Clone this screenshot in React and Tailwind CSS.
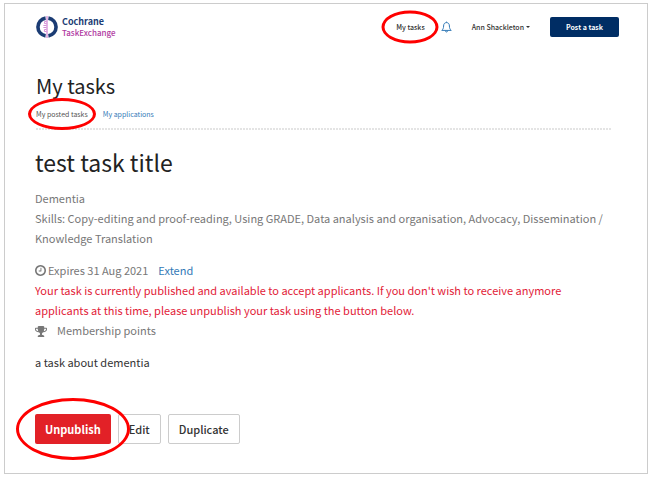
// src/pages/MyTasks.js
import React from 'react';

const skills = [
  'Copy-editing and proof-reading',
  'Using GRADE',
  'Data analysis and organisation',
  'Advocacy',
  'Dissemination / Knowledge Translation',
];

const LogoMark = () => (
  <svg className="size-[22px]" viewBox="0 0 22 22" fill="none" aria-hidden="true">
    <path d="M9.6 2.1A9 9 0 0 0 9.6 19.9" stroke="#1b3c74" strokeWidth="3.6" />
    <path d="M12.4 2.1A9 9 0 0 1 12.4 19.9" stroke="#1b3c74" strokeWidth="3.6" />
    <path d="M11 0V22" stroke="#e3b5e4" strokeWidth="2" />
    <path
      d="M10.5 5.5H8.6V7.6H10.5M10.5 9.5H7.4M7.4 11.5H10.5M10.5 13.5H8.4V15.5H10.5"
      stroke="#d48fd6"
      strokeWidth="1"
    />
  </svg>
);

const BellIcon = () => (
  <svg className="h-3 w-[11px]" viewBox="0 0 11 12" fill="none" stroke="#337ab7" aria-hidden="true">
    <path d="M5.5 .6V1.6M5.5 1.6C3.5 1.6 2.6 3 2.6 5C2.6 7.4 1.8 8.4 .8 9.4H10.2C9.2 8.4 8.4 7.4 8.4 5C8.4 3 7.5 1.6 5.5 1.6Z" />
    <path d="M4.4 9.8C4.5 11.4 6.5 11.4 6.6 9.8" />
  </svg>
);

const ClockIcon = () => (
  <svg className="h-[13px] w-[11px]" viewBox="0 0 1536 1792" fill="currentColor" aria-hidden="true">
    <path d="M896 544v448q0 14-9 23t-23 9h-320q-14 0-23-9t-9-23v-64q0-14 9-23t23-9h224v-352q0-14 9-23t23-9h64q14 0 23 9t9 23zm416 352q0-148-73-273t-198-198-273-73-273 73-198 198-73 273 73 273 198 198 273 73 273-73 198-198 73-273zm224 0q0 209-103 385.5t-279.5 279.5-385.5 103-385.5-103-279.5-279.5-103-385.5 103-385.5 279.5-279.5 385.5-103 385.5 103 279.5 279.5 103 385.5z" />
  </svg>
);

const TrophyIcon = () => (
  <svg className="h-[13px] w-3" viewBox="0 0 1664 1792" fill="currentColor" aria-hidden="true">
    <path d="M458 1015q-74-162-74-375h-256v96q0 78 94.5 162t235.5 117zm1078-279v-96h-256q0 213-74 375 141-33 235.5-117t94.5-162zm128-128v128q0 71-41.5 143t-112 130-173 97.5-215.5 44.5q-42 54-95 95-38 34-52.5 72.5t-14.5 89.5q0 54 30.5 91t97.5 37q75 0 133.5 45.5t58.5 114.5v64q0 14-9 23t-23 9h-832q-14 0-23-9t-9-23v-64q0-69 58.5-114.5t133.5-45.5q67 0 97.5-37t30.5-91q0-51-14.5-89.5t-52.5-72.5q-53-41-95-95-113-5-215.5-44.5t-173-97.5-112-130-41.5-143v-128q0-40 28-68t68-28h288v-96q0-66 47-113t113-47h576q66 0 113 47t47 113v96h288q40 0 68 28t28 68z" />
  </svg>
);

// Red ring drawn over the item it wraps
const Highlight = ({ className, children }) => (
  <div className="relative flex">
    {children}
    <span
      className={`pointer-events-none absolute top-1/2 left-1/2 z-10 -translate-x-1/2 -translate-y-1/2 rounded-[50%] border-3 border-[#fe0000] ${className}`}
    />
  </div>
);

const Header = () => (
  <header className="flex items-center justify-between pr-7 pl-[31px]">
    <a href="#home" className="flex items-center gap-1">
      <LogoMark />
      <span className="flex flex-col">
        <span className="text-[9px] leading-[11px] font-bold text-[#1b3c74]">Cochrane</span>
        <span className="text-[8px] leading-[11px] font-medium text-[#b0399f]">TaskExchange</span>
      </span>
    </a>
    <nav className="flex items-center text-[7px] font-medium text-[#333]">
      <Highlight className="h-[33px] w-[57px]">
        <a href="#tasks">My tasks</a>
      </Highlight>
      <button type="button" aria-label="Notifications" className="ml-4">
        <BellIcon />
      </button>
      <button type="button" className="ml-5 flex items-center gap-0.5">
        Ann Shackleton
        <span className="border-x-2 border-t-2 border-x-transparent border-t-[#333]" />
      </button>
      <button type="button" className="ml-5 h-5 w-[69px] rounded-xs bg-[#002d64] font-bold text-white">
        Post a task
      </button>
    </nav>
  </header>
);

const TaskActions = () => (
  <div className="mt-[42px] flex gap-[7px] text-[11px] font-medium text-[#333]">
    <Highlight className="h-[62px] w-[114px]">
      <button type="button" className="h-[30px] rounded-xs bg-[#e22127] px-2.5 font-bold text-white">
        Unpublish
      </button>
    </Highlight>
    <button type="button" className="h-[30px] rounded-xs border border-[#ccc] px-2.5">
      Edit
    </button>
    <button type="button" className="h-[30px] rounded-xs border border-[#ccc] px-2.5">
      Duplicate
    </button>
  </div>
);

export const MyTasks = () => {
  return (
    <div className="bg-white px-1 pt-[3px] pb-[5px] font-['Noto_Sans_CJK_SC','Noto_Sans',sans-serif]">
      <div className="border border-[#ccc] pt-3 pb-[29px]">
        <Header />
        <main className="pr-[35px] pl-[30px]">
          <div className="pt-[34px] pl-px">
            <h1 className="text-xl leading-7 text-[#222]">My tasks</h1>
            <div className="mt-[9px] flex gap-[15px] text-[7px] leading-[10px]">
              <Highlight className="h-8 w-[68px]">
                <a href="#posted" className="text-[#555]">My posted tasks</a>
              </Highlight>
              <a href="#applications" className="text-[#337ab7]">My applications</a>
            </div>
            <div className="mt-[9px] h-0.5 bg-[repeating-linear-gradient(90deg,#e4e4e4_0_2px,#fff_2px_3px)]" />
          </div>

          <h2 className="mt-[14px] text-[23px] leading-9 text-[#222]">test task title</h2>
          <div className="mt-2 text-[11px] leading-5 text-[#777]">
            <p>Dementia</p>
            <p>{`Skills: ${skills.join(', ')}`}</p>
            <p className="mt-3 flex items-center gap-0.5">
              <ClockIcon />
              Expires 31 Aug 2021
              <a href="#extend" className="ml-2 text-[#337ab7]">Extend</a>
            </p>
            <p className="text-[#e22137]">
              Your task is currently published and available to accept applicants. If you don't wish to receive
              anymore applicants at this time, please unpublish your task using the button below.
            </p>
            <p className="flex items-center gap-2.5">
              <TrophyIcon />
              Membership points
            </p>
            <p className="mt-3 text-[#333]">a task about dementia</p>
          </div>
          <TaskActions />
        </main>
      </div>
    </div>
  );
};

export default MyTasks;
